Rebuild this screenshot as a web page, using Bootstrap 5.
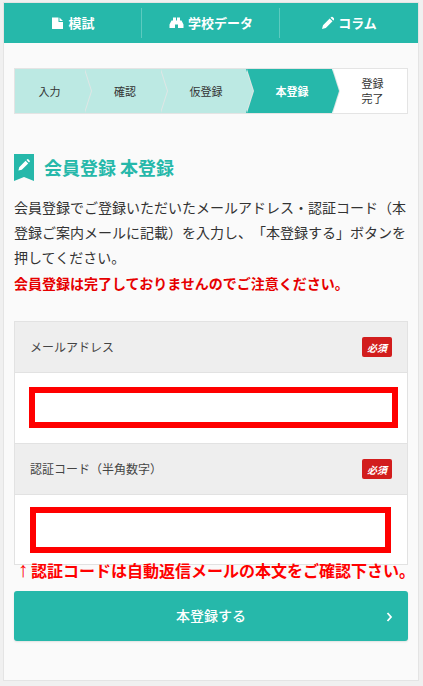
<!DOCTYPE html>
<html lang="ja">
<head>
  <meta charset="UTF-8" />
  <title>会員登録 本登録</title>
  <link href="https://cdn.jsdelivr.net/npm/bootstrap@5.3.2/dist/css/bootstrap.min.css" rel="stylesheet" />
  <style>
    body {
      background-color: #f0f0f0;
      font-family: "Noto Sans CJK JP", "Noto Sans", sans-serif;
      color: #333;
      font-size: 14px;
      text-spacing-trim: space-all;
    }
    .shell {
      width: 414px;
      margin: 3px 0 6px 4px;
      height: 677px;
      background-color: #fafafa;
      box-shadow: 0 0 0 1px #e4e4e4;
    }
    .top-nav {
      height: 40px;
      background-color: #26b8aa;
      padding: 5px 0;
    }
    .top-nav a {
      flex: 1 1 0;
      color: #fff;
      font-size: 13px;
      font-weight: 700;
      text-decoration: none;
      gap: 4px;
    }
    .top-nav a + a {
      margin-left: -1px;
      border-left: 1px solid rgba(255, 255, 255, 0.25);
    }
    .top-nav svg { fill: #fff; }

    .steps {
      margin: 25px 10px 0;
      height: 46px;
      border: 1px solid #e4e4e4;
      background-color: #fff;
      font-size: 11px;
      line-height: 15px;
    }
    .step {
      position: relative;
      padding-left: 6px;
      background-color: #bce9e3;
    }
    .step:first-child { width: 69px; padding-left: 0; }
    .step-w76 { width: 76px; }
    .step-w86 { width: 86px; }
    .step::before,
    .step::after {
      content: "";
      position: absolute;
      top: 0;
      bottom: 0;
      width: 7px;
      clip-path: polygon(0 0, 100% 50%, 0 100%);
      z-index: 1;
    }
    .step::before { left: calc(100% + 1px); background-color: #dfe6e5; }
    .step::after { left: 100%; background-color: #bce9e3; }
    .step.now { background-color: #26b8aa; color: #fff; font-weight: 700; }
    .step.now::after { background-color: #26b8aa; }
    .step.last {
      flex: 1 1 0;
      background-color: #fff;
      text-align: center;
    }
    .step.last::before,
    .step.last::after { display: none; }

    .page-title {
      margin: 40px 10px 0;
      height: 27px;
      gap: 10px;
      color: #26b8aa;
      font-size: 18px;
      font-weight: 700;
      line-height: 27px;
    }
    .lead-text {
      margin: 14px 10px 0;
      line-height: 25.2px;
    }
    .warn-text { color: #e60000; font-weight: 700; }

    .entry-form {
      margin: 25px 10px 0;
      border: 1px solid #e2e2e2;
    }
    .entry-head {
      height: 51px;
      padding: 1px 15px 0;
      background-color: #eeeeee;
      border-bottom: 1px solid #e2e2e2;
      font-size: 12px;
      color: #444;
    }
    .req-tag {
      width: 30px;
      height: 20px;
      border-radius: 2px;
      background-color: #d21d1d;
      color: #fff;
      font-size: 10px;
      font-weight: 700;
      font-style: italic;
    }
    .entry-body {
      height: 70px;
      background-color: #fff;
    }
    .entry-body + .entry-head {
      height: 52px;
      border-top: 1px solid #e2e2e2;
    }
    .entry-body:last-child { height: 69px; }
    .mask-box {
      border: 6px solid #ff0000;
      border-radius: 0;
      background-color: #fff;
    }
    .mask-a { width: 369px; height: 41px; margin: 14px 0 0 14px; }
    .mask-b { width: 361px; height: 46px; margin: 12px 0 0 15px; }
    .code-note {
      position: relative;
      margin: -4px 0 0 11px;
      width: 405px;
      height: 17px;
      color: #ff0000;
      font-size: 16px;
      font-weight: 700;
      line-height: 17px;
      white-space: nowrap;
    }
    .note-arrow {
      display: inline-block;
      width: 16px;
      text-align: center;
      font-family: "Liberation Sans", sans-serif;
      font-size: 21px;
      font-weight: 400;
    }
    .send-btn {
      display: flex;
      align-items: center;
      justify-content: center;
      position: relative;
      width: 394px;
      height: 50px;
      margin: 13px 0 0 10px;
      border: 0;
      border-radius: 3px;
      background-color: #26b8aa;
      color: #fff;
      font-size: 14px;
      font-weight: 500;
      box-shadow: 0 1px 2px rgba(0, 0, 0, 0.1);
    }
    .send-btn svg {
      position: absolute;
      right: 15px;
      top: 21px;
    }
  </style>
</head>
<body>
  <div class="shell">
    <!-- top menu -->
    <nav class="top-nav d-flex">
      <a href="#" class="d-flex align-items-center justify-content-center">
        <svg width="13" height="14" viewBox="0 0 13 14"><path d="M1 1.500h6.500v4.500h4.500v6.500a.5.5 0 0 1-.5.5h-10a.5.5 0 0 1-.5-.5zM8.500 1.500l3.500 3.500h-3.500z"/></svg>
        模試
      </a>
      <a href="#" class="d-flex align-items-center justify-content-center">
        <svg width="15" height="14" viewBox="0 0 15 14"><path d="M4 1.500h3v3h1v-3h3v3h1.500l2 4v3.500h-5.500v-3.500h-3v3.500h-5.500v-3.500l2-4h1.500z"/></svg>
        学校データ
      </a>
      <a href="#" class="d-flex align-items-center justify-content-center">
        <svg width="13" height="14" viewBox="0 0 13 14"><path d="M8.700 2.500l2.800 2.800-6.700 6.700-3.800 1 1-3.800zM9.500 1.700l.8-.7a1 1 0 0 1 1.400 0l1.400 1.400a1 1 0 0 1 0 1.400l-.8.800z"/></svg>
        コラム
      </a>
    </nav>

    <!-- progress -->
    <div class="steps d-flex">
      <div class="step d-flex align-items-center justify-content-center">入力</div>
      <div class="step step-w76 d-flex align-items-center justify-content-center">確認</div>
      <div class="step step-w86 d-flex align-items-center justify-content-center">仮登録</div>
      <div class="step step-w86 now d-flex align-items-center justify-content-center">本登録</div>
      <div class="step last d-flex align-items-center justify-content-center">登録<br />完了</div>
    </div>

    <h1 class="page-title d-flex">
      <svg width="20" height="27" viewBox="0 0 20 27">
        <path fill="#26b8aa" d="M0 0h20v27l-10-4-10 4z"/>
        <path fill="#fff" d="M11.600 6.800l2.600 2.600-6.400 6.400-3.400.8.800-3.400zM12.500 6l.7-.7a.8.8 0 0 1 1.100 0l1.400 1.400a.8.8 0 0 1 0 1.100l-.7.700z"/>
      </svg>
      <span>会員登録 本登録</span>
    </h1>

    <p class="lead-text mb-0">
      会員登録でご登録いただいたメールアドレス・認証コード（本登録ご案内メールに記載）を入力し、「本登録する」ボタンを押してください。<br />
      <span class="warn-text">会員登録は完了しておりませんのでご注意ください。</span>
    </p>

    <form>
      <div class="entry-form">
        <div class="entry-head d-flex align-items-center justify-content-between">
          <span>メールアドレス</span>
          <span class="req-tag d-flex align-items-center justify-content-center">必須</span>
        </div>
        <div class="entry-body d-flex align-items-start">
          <div class="mask-box mask-a"></div>
        </div>
        <div class="entry-head d-flex align-items-center justify-content-between">
          <span>認証コード（半角数字）</span>
          <span class="req-tag d-flex align-items-center justify-content-center">必須</span>
        </div>
        <div class="entry-body d-flex align-items-start">
          <div class="mask-box mask-b"></div>
        </div>
      </div>
      <div class="code-note"><span class="note-arrow">↑</span>認証コードは自動返信メールの本文をご確認下さい。</div>
      <button type="button" class="send-btn">
        本登録する
        <svg width="7" height="10" viewBox="0 0 7 10"><path d="M1.500 1l3.500 4-3.500 4" fill="none" stroke="#fff" stroke-width="1.800"/></svg>
      </button>
    </form>
  </div>
  <script src="https://cdn.jsdelivr.net/npm/bootstrap@5.3.2/dist/js/bootstrap.bundle.min.js"></script>
</body>
</html>
